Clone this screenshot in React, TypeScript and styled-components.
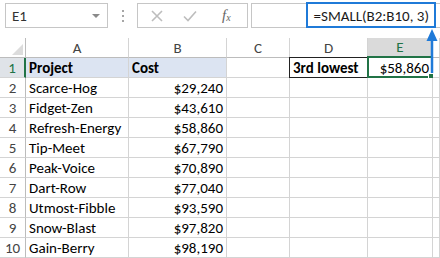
import React from 'react'
import styled, { createGlobalStyle, css } from 'styled-components'

const FONT = `'Carlito', 'Lato', 'Liberation Sans', sans-serif`
const GREEN = '#217346'
const BLUE = '#1f7ad8'
const GRID = '#d4d4d4'

const GlobalStyle = createGlobalStyle`
  html, body { margin: 0; padding: 0; background: #fff; }
  * { box-sizing: border-box; }
`

const Sheet = styled.div`
  position: relative;
  width: 440px;
  height: 258px;
  overflow: hidden;
  background: #fff;
  font-family: ${FONT};
  color: #000;
`

const Toolbar = styled.div`
  display: flex;
  align-items: stretch;
  height: 38px;
  padding: 3px 0 10px 5px;
`
const NameBox = styled.div`
  display: flex;
  align-items: center;
  justify-content: space-between;
  width: 103px;
  height: 25px;
  border: 1px solid #c6c6c6;
  padding: 0 7px 0 6px;
  font-size: 15px;
  color: #333;
`
const Caret = styled.span`
  width: 0;
  height: 0;
  border-left: 4px solid transparent;
  border-right: 4px solid transparent;
  border-top: 4px solid #8a8a8a;
`
const Dots = styled.div`
  display: flex;
  flex-direction: column;
  justify-content: center;
  align-items: center;
  gap: 3px;
  width: 29px;
  span {
    width: 2px;
    height: 2px;
    background: #a6a6a6;
  }
`
const Buttons = styled.div`
  display: flex;
  align-items: center;
  gap: 20px;
  width: 111px;
  height: 25px;
  border: 1px solid #c6c6c6;
  padding-left: 13px;
`
const FxLabel = styled.span`
  margin-left: 5px;
  font-family: 'Liberation Serif', serif;
  font-style: italic;
  font-size: 15px;
  color: #666;
  sub { font-size: 10px; vertical-align: -1px; }
`
const FormulaInput = styled.div`
  flex: 1;
  margin-left: 3px;
  height: 25px;
  border: 1px solid #c6c6c6;
  border-right: none;
  display: flex;
  align-items: center;
  justify-content: flex-end;
  padding-right: 11px;
  font-size: 15px;
  color: #1a1a1a;
`

const Grid = styled.div`
  display: grid;
  grid-template-columns: 26px 103px 98px 63px 78px 65px 1fr;
  grid-auto-rows: 20px;
`

type CellProps = { $align?: 'left' | 'right'; $bold?: boolean; $fill?: string }

const Cell = styled.div<CellProps>`
  position: relative;
  display: flex;
  align-items: center;
  justify-content: ${({ $align }) => ($align === 'right' ? 'flex-end' : 'flex-start')};
  padding: 0 3px;
  border-right: 1px solid ${GRID};
  border-bottom: 1px solid ${GRID};
  font-size: 15px;
  font-weight: ${({ $bold }) => ($bold ? 700 : 400)};
  background: ${({ $fill }) => $fill || '#fff'};
  white-space: nowrap;
`
const Header = styled(Cell)<{ $active?: boolean }>`
  justify-content: center;
  color: #444;
  border-bottom-color: #bcbcbc;
  ${({ $active }) =>
    $active &&
    css`
      background: #dadada;
      color: ${GREEN};
      border-bottom: 2px solid ${GREEN};
    `}
`
const RowHead = styled(Cell)<{ $active?: boolean }>`
  justify-content: center;
  padding: 0;
  color: #444;
  border-right-color: #bcbcbc;
  ${({ $active }) =>
    $active &&
    css`
      background: #dfe3e8;
      color: ${GREEN};
      border-right: 2px solid ${GREEN};
    `}
`
const Corner = styled(Cell)`
  border-right-color: #bcbcbc;
  border-bottom-color: #bcbcbc;
  &::after {
    content: '';
    position: absolute;
    right: 2px;
    bottom: 2px;
    border-left: 11px solid transparent;
    border-bottom: 11px solid #dcdcdc;
  }
`
const Boxed = styled(Cell)`
  &::before {
    content: '';
    position: absolute;
    top: -1px;
    left: -1px;
    right: -1px;
    bottom: -1px;
    border: 1px solid #222;
  }
`
const Selected = styled(Cell)`
  &::before {
    content: '';
    position: absolute;
    top: -2px;
    left: -1px;
    right: -1px;
    bottom: -1px;
    border: 2px solid ${GREEN};
  }
  &::after {
    content: '';
    position: absolute;
    right: -4px;
    bottom: -4px;
    width: 6px;
    height: 6px;
    background: ${GREEN};
    border: 1px solid #fff;
  }
`

const Highlight = styled.div`
  position: absolute;
  left: 306px;
  top: 2px;
  width: 130px;
  height: 26px;
  border: 2px solid ${BLUE};
`
const Arrow = styled.svg`
  position: absolute;
  left: 424px;
  top: 27px;
`

const rows: [string, string][] = [
  ['Scarce-Hog', '$29,240'],
  ['Fidget-Zen', '$43,610'],
  ['Refresh-Energy', '$58,860'],
  ['Tip-Meet', '$67,790'],
  ['Peak-Voice', '$70,890'],
  ['Dart-Row', '$77,040'],
  ['Utmost-Fibble', '$93,590'],
  ['Snow-Blast', '$97,820'],
  ['Gain-Berry', '$98,190'],
]

const BLUE_FILL = '#dce4f2'

export default function App() {
  return (
    <Sheet>
      <GlobalStyle />
      <Toolbar>
        <NameBox>
          E1
          <Caret />
        </NameBox>
        <Dots>
          <span />
          <span />
          <span />
        </Dots>
        <Buttons>
          <svg width="12" height="12" viewBox="0 0 12 12">
            <path d="M1 1L11 11M11 1L1 11" stroke="#bdbdbd" strokeWidth="1.6" />
          </svg>
          <svg width="14" height="12" viewBox="0 0 14 12">
            <path d="M1 6.5L5 10.5L13 1.5" stroke="#bdbdbd" strokeWidth="1.6" fill="none" />
          </svg>
          <FxLabel>
            f<sub>x</sub>
          </FxLabel>
        </Buttons>
        <FormulaInput>=SMALL(B2:B10, 3)</FormulaInput>
      </Toolbar>

      <Grid>
        <Corner />
        {['A', 'B', 'C', 'D', 'E', 'F'].map((c) => (
          <Header key={c} $active={c === 'E'}>
            {c !== 'F' ? c : ''}
          </Header>
        ))}

        <RowHead $active>1</RowHead>
        <Cell $bold $fill={BLUE_FILL}>Project</Cell>
        <Cell $bold $fill={BLUE_FILL}>Cost</Cell>
        <Cell />
        <Boxed $bold>3rd lowest</Boxed>
        <Selected $align="right">$58,860</Selected>
        <Cell />

        {rows.map(([name, cost], i) => (
          <React.Fragment key={name}>
            <RowHead>{i + 2}</RowHead>
            <Cell>{name}</Cell>
            <Cell $align="right">{cost}</Cell>
            <Cell />
            <Cell />
            <Cell />
            <Cell />
          </React.Fragment>
        ))}
      </Grid>

      <Highlight />
      <Arrow width="16" height="48" viewBox="0 0 16 48">
        <path d="M8 12V46" stroke={BLUE} strokeWidth="2.5" />
        <path d="M2.5 14L8 2L13.5 14Z" fill={BLUE} />
      </Arrow>
    </Sheet>
  )
}
